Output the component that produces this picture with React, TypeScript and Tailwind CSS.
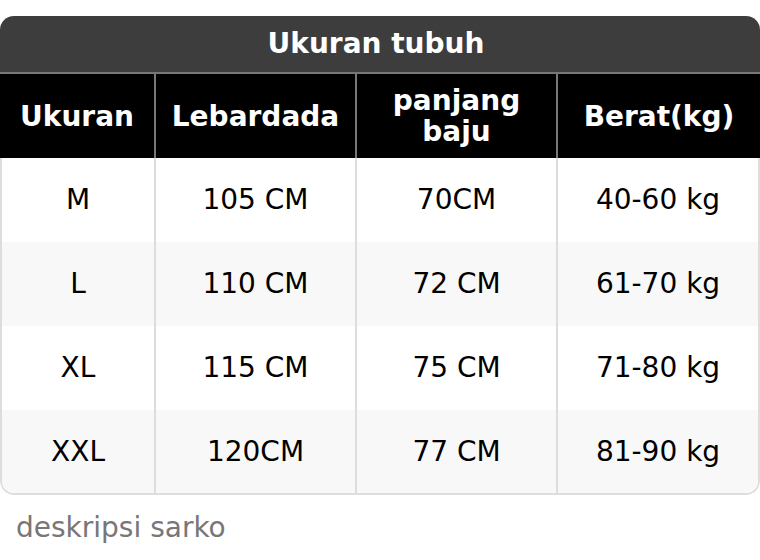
const rows = [
  ["M", "105 CM", "70CM", "40-60 kg"],
  ["L", "110 CM", "72 CM", "61-70 kg"],
  ["XL", "115 CM", "75 CM", "71-80 kg"],
  ["XXL", "120CM", "77 CM", "81-90 kg"],
];

const cols = "grid grid-cols-[154px_201px_201px_1fr]";

export default function App() {
  return (
    <div className="w-[760px] h-[560px] bg-white pt-4 font-['DejaVu_Sans',sans-serif] text-[28px]">
      <div className="rounded-[14px] overflow-hidden">
        <div className="h-[58px] bg-[#3d3d3d] border-b-2 border-[#777] flex items-center justify-center pr-2 text-white font-bold">
          Ukuran tubuh
        </div>
        <div className={`${cols} h-[84px] bg-black text-white font-bold leading-[31px]`}>
          <div className="flex items-center justify-center text-center">Ukuran</div>
          <div className="flex items-center justify-center text-center border-l-2 border-[#777]">Lebardada</div>
          <div className="flex items-center justify-center text-center border-l-2 border-[#777]">
            panjang
            <br />
            baju
          </div>
          <div className="flex items-center justify-center text-center border-l-2 border-[#777]">Berat(kg)</div>
        </div>
        <div className="border-x-2 border-b-2 border-[#ddd] rounded-b-[14px] overflow-hidden text-black">
          {rows.map((r, i) => (
            <div
              key={r[0]}
              className={`grid grid-cols-[152px_201px_201px_1fr] ${i === rows.length - 1 ? "h-[83px]" : "h-[84px]"} ${i % 2 === 1 ? "bg-[#f8f8f8]" : "bg-white"}`}
            >
              {r.map((c, j) => (
                <div
                  key={j}
                  className={`flex items-center justify-center ${j > 0 ? "border-l-2 border-[#ddd]" : ""}`}
                >
                  {c}
                </div>
              ))}
            </div>
          ))}
        </div>
      </div>
      <div className="mt-4 px-4 leading-[34px] text-[#777]">deskripsi sarko</div>
    </div>
  );
}
